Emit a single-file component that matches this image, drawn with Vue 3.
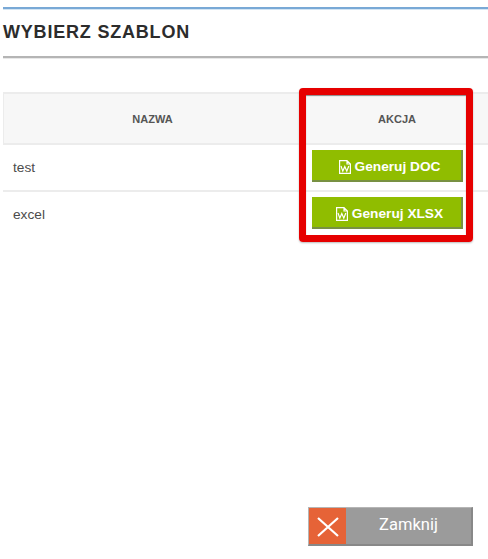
<script setup>
import {ref} from "vue";

/**
 * Lista szablonów
 */
const templates = ref([
  {name: 'test', type: 'DOC'},
  {name: 'excel', type: 'XLSX'}
]);
</script>

<template>
  <div class="modal">
    <h1>WYBIERZ SZABLON</h1>
    <div class="table">
      <div class="row head">
        <span class="name">NAZWA</span>
        <span class="action">AKCJA</span>
      </div>
      <div v-for="item in templates" :key="item.name" class="row">
        <span class="name">{{ item.name }}</span>
        <span class="action">
          <button class="generate">
            <svg width="12" height="14" viewBox="0 0 12 14" fill="none" stroke="#fff">
              <path d="M.6 .6H8L11.4 4V13.4H.6Z M8 .6V4H11.4" stroke-width="1.2"/>
              <path d="M2 6L3.8 11.2L5.8 6.5L7.8 11.2L9.8 6" stroke-width="1.2"/>
            </svg>
            <span>Generuj {{ item.type }}</span>
          </button>
        </span>
      </div>
      <div class="highlight"></div>
    </div>
    <div class="footer">
      <button class="close">
        <span class="close-icon">
          <svg width="22" height="20" viewBox="0 0 22 20" fill="none" stroke="#fff" stroke-width="2.2">
            <path d="M1 1L21 19M21 1L1 19"/>
          </svg>
        </span>
        <span class="close-label">Zamknij</span>
      </button>
    </div>
  </div>
</template>

<style>
body {
  margin: 0;
  background: #fff;
}
</style>

<style scoped>
.modal {
  display: flex;
  flex-direction: column;
  box-sizing: border-box;
  height: 559px;
  padding: 7px 0 13px 3px;
  overflow: hidden;
  font-family: "Liberation Sans", Arial, sans-serif;
  color: #4c4c4c;
}

h1 {
  box-sizing: border-box;
  height: 51px;
  margin: 0 0 34px;
  border-top: 2px solid #79a9d6;
  border-bottom: 2px solid #b5b5b5;
  box-shadow: inset 0 1px #d3e5f4, 0 1px #e8e8e8;
  font-size: 18px;
  font-weight: bold;
  line-height: 46px;
  letter-spacing: 0.8px;
  color: #2c2c2c;
}

.table {
  position: relative;
}

.row {
  display: flex;
  align-items: center;
  box-sizing: border-box;
  height: 47px;
  font-size: 13.7px;
}

.row + .row {
  border-bottom: 2px solid #ececec;
}

.row:nth-child(3) {
  height: 45px;
  border-bottom: none;
}

.head {
  height: 53px;
  border: 2px solid #ececec;
  border-width: 2px 0 2px 1px;
  background: #f7f7f7;
  font-size: 11px;
  font-weight: bold;
  color: #555;
}

.name {
  flex: none;
  box-sizing: border-box;
  width: 299px;
  padding-left: 10px;
}

.head .name {
  padding: 0 2px 0 0;
  text-align: center;
}

.action {
  display: flex;
  justify-content: center;
  box-sizing: border-box;
  width: 170px;
}

.head .action {
  padding-left: 18px;
}

.generate {
  display: flex;
  align-items: center;
  justify-content: center;
  gap: 4px;
  box-sizing: border-box;
  width: 151px;
  height: 32px;
  margin-bottom: 3px;
  padding: 3px 0 0 7px;
  border: solid #789143;
  border-width: 0 2px 2px 0;
  background: #90bd00;
  font: bold 13.7px "Liberation Sans", Arial, sans-serif;
  color: #fff;
}

.highlight {
  position: absolute;
  top: -4px;
  left: 296px;
  box-sizing: border-box;
  width: 174px;
  height: 154px;
  border: 7px solid #e60000;
  border-radius: 4px;
  box-shadow: 0 1px 2px #bbb, inset 0 1px 1px #888;
}

.footer {
  display: flex;
  margin-top: auto;
  padding-left: 305px;
}

.close {
  display: flex;
  box-sizing: border-box;
  width: 165px;
  height: 39px;
  padding: 0;
  border: 1px solid #b5b5b5;
  border-right: 2px solid #888;
  border-bottom: 2px solid #888;
  background: #9b9b9b;
  color: #fff;
}

.close-icon {
  display: flex;
  align-items: center;
  justify-content: center;
  width: 37px;
  height: 36px;
  padding-top: 2px;
  box-sizing: border-box;
  background: #e66337;
}

.close-label {
  flex: 1;
  font: 16.5px/34px Roboto, sans-serif;
  text-align: center;
}
</style>
